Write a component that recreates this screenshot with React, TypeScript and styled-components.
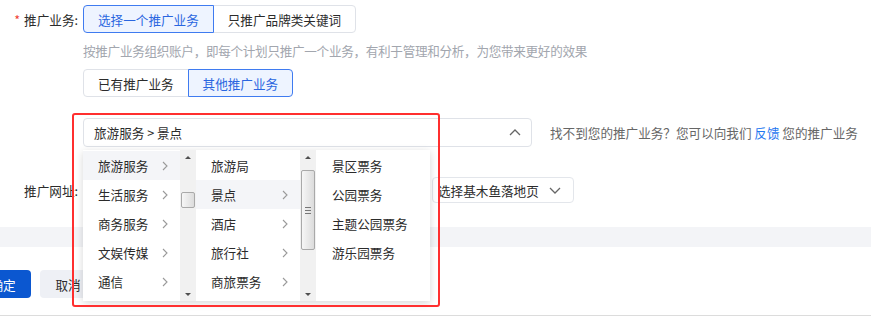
import React from "react";
import styled, { createGlobalStyle } from "styled-components";

const GlobalStyle = createGlobalStyle`
  body {
    margin: 0;
    background: #fff;
    font-family: "Noto Sans CJK SC", "Noto Sans", sans-serif;
    font-size: 12.6px;
    color: #2b2b2b;
  }
`;

const Page = styled.div`
  position: relative;
  width: 871px;
  height: 319px;
  overflow: hidden;
  padding-top: 5px;
  box-sizing: border-box;
`;

const Row = styled.div<{ $mt?: number }>`
  display: flex;
  align-items: center;
  margin-top: ${(p) => p.$mt ?? 0}px;
`;

const Label = styled.div`
  width: 78px;
  margin-right: 5px;
  flex-shrink: 0;
  text-align: right;
  color: #2b2b2b;
  white-space: nowrap;

  em {
    font-style: normal;
    color: #f04134;
    margin-right: 4px;
  }
`;

const Indent = styled.div<{ $mt?: number }>`
  margin-left: 83px;
  margin-top: ${(p) => p.$mt ?? 0}px;
`;

const Hint = styled(Indent)`
  color: #a2a6ae;
  line-height: 18px;
  letter-spacing: -0.3px;
`;

const SegGroup = styled.div`
  display: flex;
`;

const SegButton = styled.div<{ $active?: boolean }>`
  position: relative;
  height: 28px;
  box-sizing: border-box;
  padding: 0 14px;
  display: flex;
  align-items: center;
  border: 1px solid ${(p) => (p.$active ? "#3f7bf0" : "#dfe2e8")};
  background: ${(p) => (p.$active ? "#eef4ff" : "#fff")};
  color: ${(p) => (p.$active ? "#2a66e0" : "#2b2b2b")};
  z-index: ${(p) => (p.$active ? 1 : 0)};
  white-space: nowrap;

  & + & {
    margin-left: -1px;
  }
  &:first-child {
    border-radius: 4px 0 0 4px;
  }
  &:last-child {
    border-radius: 0 4px 4px 0;
  }
`;

const Field = styled.div`
  position: relative;
  margin-left: 83px;
  width: 449px;
`;

const SelectBox = styled.div`
  height: 29px;
  box-sizing: border-box;
  border: 1px solid #dfe2e8;
  border-radius: 4px;
  padding: 0 10px;
  display: flex;
  align-items: center;
  justify-content: space-between;
  color: #2b2b2b;
`;

const HelpText = styled.div`
  margin-left: 18px;
  color: #666;
  white-space: nowrap;

  a {
    color: #1f78f0;
    text-decoration: none;
  }
`;

const Dropdown = styled.div`
  position: absolute;
  top: 32px;
  left: 0;
  width: 347px;
  height: 151px;
  background: #fff;
  box-shadow: 0 2px 8px rgba(0, 0, 0, 0.16);
  display: flex;
  z-index: 5;
`;

const Column = styled.div<{ $w: number }>`
  width: ${(p) => p.$w}px;
  display: flex;
  flex-shrink: 0;
`;

const List = styled.div`
  flex: 1;
  padding-top: 1px;
  display: flex;
  flex-direction: column;
`;

const Item = styled.div<{ $active?: boolean; $pl: number }>`
  height: 29px;
  display: flex;
  align-items: center;
  justify-content: space-between;
  padding: 0 12px 0 ${(p) => p.$pl}px;
  background: ${(p) => (p.$active ? "#f4f5f8" : "transparent")};
  color: #2b2b2b;
  white-space: nowrap;
`;

const ScrollTrack = styled.div`
  width: 16px;
  flex-shrink: 0;
  background: #f1f1f1;
  display: flex;
  flex-direction: column;
  align-items: center;
`;

const ArrowBox = styled.div`
  height: 14px;
  width: 16px;
  display: flex;
  align-items: center;
  justify-content: center;
`;

const Arrow = styled.div<{ $down?: boolean }>`
  width: 0;
  height: 0;
  border-left: 3px solid transparent;
  border-right: 3px solid transparent;
  ${(p) => (p.$down ? "border-top: 3px solid #505050;" : "border-bottom: 3px solid #505050;")}
`;

const TrackBody = styled.div`
  flex: 1;
  width: 100%;
  display: flex;
  flex-direction: column;
  align-items: center;
`;

const Thumb = styled.div<{ $top: number; $h: number }>`
  margin-top: ${(p) => p.$top}px;
  width: 14px;
  height: ${(p) => p.$h}px;
  box-sizing: border-box;
  border: 1px solid #a9a9a9;
  border-radius: 2px;
  background: linear-gradient(to right, #f6f6f6, #dcdcdc);
  display: flex;
  flex-direction: column;
  align-items: center;
  justify-content: center;
  gap: 2px;
`;

const Grip = styled.div`
  width: 6px;
  height: 1px;
  background: #777;
`;

const Annotation = styled.div`
  position: absolute;
  left: 72px;
  top: 113px;
  width: 368px;
  height: 194px;
  box-sizing: border-box;
  border: 2px solid #ff2f2f;
  border-radius: 3px;
  pointer-events: none;
  z-index: 10;
`;

const PlainBox = styled.div<{ $w: number; $ml?: number }>`
  width: ${(p) => p.$w}px;
  margin-left: ${(p) => p.$ml ?? 0}px;
  height: 26px;
  box-sizing: border-box;
  border: 1px solid #e3e6eb;
  border-radius: 4px;
  display: flex;
  align-items: center;
  padding: 0 10px 0 5px;
  gap: 10px;
  color: #2b2b2b;
  white-space: nowrap;
`;

const Band = styled.div<{ $mt: number }>`
  margin-top: ${(p) => p.$mt}px;
  height: 20px;
  background: #f3f4f7;
`;

const Footer = styled.div<{ $mt: number }>`
  margin-top: ${(p) => p.$mt}px;
  margin-left: -25px;
  display: flex;
  gap: 9px;
`;

const Button = styled.div<{ $primary?: boolean }>`
  width: 56px;
  height: 28px;
  border-radius: 4px;
  display: flex;
  align-items: center;
  justify-content: center;
  background: ${(p) => (p.$primary ? "#0b57d0" : "#eef0f5")};
  color: ${(p) => (p.$primary ? "#fff" : "#2b2b2b")};
`;

const Divider = styled.div<{ $mt: number }>`
  margin-top: ${(p) => p.$mt}px;
  height: 1px;
  background: #dcdcdc;
`;

const Chevron = ({ dir }: { dir: "up" | "down" | "right" }) => {
  if (dir === "right") {
    return (
      <svg width="6" height="10" viewBox="0 0 6 10">
        <polyline points="1,1 5,5 1,9" fill="none" stroke="#9a9a9a" strokeWidth="1.1" />
      </svg>
    );
  }
  const pts = dir === "up" ? "1,6 6,1 11,6" : "1,1 6,6 11,1";
  return (
    <svg width="12" height="7" viewBox="0 0 12 7">
      <polyline points={pts} fill="none" stroke="#666" strokeWidth="1.3" />
    </svg>
  );
};

const Scrollbar = ({ top, height, grip }: { top: number; height: number; grip?: boolean }) => (
  <ScrollTrack>
    <ArrowBox>
      <Arrow />
    </ArrowBox>
    <TrackBody>
      <Thumb $top={top} $h={height}>
        {grip && (
          <>
            <Grip />
            <Grip />
            <Grip />
          </>
        )}
      </Thumb>
    </TrackBody>
    <ArrowBox>
      <Arrow $down />
    </ArrowBox>
  </ScrollTrack>
);

const level1 = ["旅游服务", "生活服务", "商务服务", "文娱传媒", "通信"];
const level2 = ["旅游局", "景点", "酒店", "旅行社", "商旅票务"];
const level3 = ["景区票务", "公园票务", "主题公园票务", "游乐园票务"];

export default function App() {
  return (
    <>
      <GlobalStyle />
      <Page>
        <Row>
          <Label>
            <em>*</em>推广业务:
          </Label>
          <SegGroup>
            <SegButton $active>选择一个推广业务</SegButton>
            <SegButton>只推广品牌类关键词</SegButton>
          </SegGroup>
        </Row>
        <Hint $mt={9}>
          按推广业务组织账户，即每个计划只推广一个业务，有利于管理和分析，为您带来更好的效果
        </Hint>
        <Indent $mt={9}>
          <SegGroup>
            <SegButton>已有推广业务</SegButton>
            <SegButton $active>其他推广业务</SegButton>
          </SegGroup>
        </Indent>

        <Row $mt={21}>
          <Field>
            <SelectBox>
              <span>旅游服务 &gt; 景点</span>
              <Chevron dir="up" />
            </SelectBox>
            <Dropdown>
              <Column $w={113}>
                <List>
                  {level1.map((t, i) => (
                    <Item key={t} $pl={15} $active={i === 0}>
                      {t}
                      <Chevron dir="right" />
                    </Item>
                  ))}
                </List>
                <Scrollbar top={28} height={16} />
              </Column>
              <Column $w={120}>
                <List>
                  {level2.map((t, i) => (
                    <Item key={t} $pl={15} $active={i === 1}>
                      {t}
                      {i > 0 && <Chevron dir="right" />}
                    </Item>
                  ))}
                </List>
                <Scrollbar top={6} height={80} grip />
              </Column>
              <Column $w={114}>
                <List>
                  {level3.map((t) => (
                    <Item key={t} $pl={16}>
                      {t}
                    </Item>
                  ))}
                </List>
              </Column>
            </Dropdown>
          </Field>
          <HelpText>
            找不到您的推广业务？您可以向我们 <a>反馈</a> 您的推广业务
          </HelpText>
        </Row>

        <Row $mt={30}>
          <Label>推广网址:</Label>
          <PlainBox $w={330} />
          <PlainBox $w={142} $ml={19}>
            选择基木鱼落地页
            <Chevron dir="down" />
          </PlainBox>
        </Row>

        <Band $mt={24} />

        <Footer $mt={23}>
          <Button $primary>确定</Button>
          <Button>取消</Button>
        </Footer>

        <Divider $mt={17} />

        <Annotation />
      </Page>
    </>
  );
}
